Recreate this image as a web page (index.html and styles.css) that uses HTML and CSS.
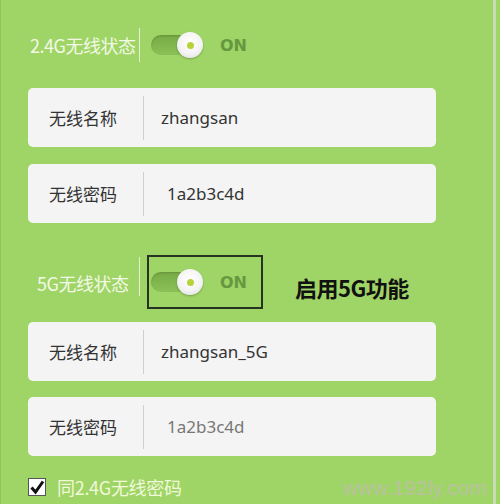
FILE: index.html
```html
<!DOCTYPE html>
<html lang="zh">
<head>
<meta charset="utf-8">
<link rel="stylesheet" href="styles.css">
</head>
<body>
<div class="page">
  <div class="status status--first">
    <span class="status-label status-label--a">2.4G无线状态</span>
    <span class="vsep vsep--a"></span>
    <div class="toggle-wrap">
      <span class="toggle"><span class="track"></span><span class="knob"><span class="dot"></span></span></span>
      <span class="on">ON</span>
    </div>
  </div>

  <div class="card card--first">
    <span class="card-label">无线名称</span>
    <span class="card-sep"></span>
    <span class="card-value">zhangsan</span>
  </div>
  <div class="card card--gap">
    <span class="card-label">无线密码</span>
    <span class="card-sep"></span>
    <span class="card-value card-value--pw">1a2b3c4d</span>
  </div>

  <div class="status status--second">
    <span class="status-label status-label--b">5G无线状态</span>
    <span class="vsep vsep--b"></span>
    <div class="toggle-wrap toggle-wrap--boxed">
      <span class="toggle"><span class="track"></span><span class="knob"><span class="dot"></span></span></span>
      <span class="on">ON</span>
    </div>
    <span class="note">启用5G功能</span>
  </div>

  <div class="card card--third">
    <span class="card-label">无线名称</span>
    <span class="card-sep"></span>
    <span class="card-value">zhangsan_5G</span>
  </div>
  <div class="card card--fourth">
    <span class="card-label">无线密码</span>
    <span class="card-sep"></span>
    <span class="card-value card-value--pw card-value--muted">1a2b3c4d</span>
  </div>

  <div class="check-row">
    <span class="checkbox">
      <svg viewBox="0 0 18 18" width="18" height="18"><path d="M3.5 9.5 L7.5 14 L15 3.5" fill="none" stroke="#111" stroke-width="3" stroke-linejoin="miter"/></svg>
    </span>
    <span class="check-label">同2.4G无线密码</span>
  </div>

  <div class="watermark">www.192ly.com</div>
</div>
</body>
</html>
```
FILE: styles.css
```css
html, body {
  margin: 0;
  padding: 0;
}
body {
  background: #9fd466;
  font-family: "Noto Sans CJK SC", "Noto Sans", sans-serif;
}
.page {
  position: relative;
  width: 496px;
  height: 504px;
  box-sizing: border-box;
  border-left: 1px solid #8dc556;
  border-right: 3px solid #c9dcb6;
  padding: 27px 0 0 27px;
  overflow: hidden;
}
.status {
  display: flex;
  align-items: center;
}
.status--first {
  height: 36px;
}
.status--second {
  margin-top: 33px;
  height: 54px;
}
.status-label {
  font-size: 18px;
  color: #f2f9e4;
  line-height: 20px;
  letter-spacing: -0.5px;
  white-space: nowrap;
}
.status-label--a {
  margin-left: 2px;
  width: 109px;
}
.status-label--b {
  margin-left: 9px;
  width: 102px;
}
.vsep {
  width: 1px;
  background: #e4f2d2;
}
.vsep--a { height: 34px; }
.vsep--b { height: 39px; margin-top: -14px; }
.toggle-wrap {
  display: flex;
  align-items: center;
  margin-left: 11px;
  height: 36px;
}
.toggle-wrap--boxed {
  margin-left: 7px;
  height: 50px;
  width: 110px;
  border: 2px solid #263320;
  padding-left: 2px;
  box-sizing: content-box;
  margin-top: -2px;
}
.toggle {
  position: relative;
  width: 52px;
  height: 26px;
  display: block;
}
.track {
  position: absolute;
  left: 0;
  top: 3px;
  width: 38px;
  height: 20px;
  border-radius: 10px;
  background: linear-gradient(#76aa46, #8bc156);
  box-shadow: inset 0 1px 2px rgba(0,0,0,0.15);
}
.knob {
  position: absolute;
  left: 26px;
  top: 0;
  width: 26px;
  height: 26px;
  border-radius: 50%;
  background: radial-gradient(circle at 50% 40%, #ffffff 0%, #f4f4f4 55%, #d8d8d8 100%);
  box-shadow: 0 1px 2px rgba(0,0,0,0.25);
}
.dot {
  position: absolute;
  left: 10px;
  top: 10px;
  width: 7px;
  height: 7px;
  border-radius: 50%;
  background: #b8d23a;
}
.on {
  margin-left: 17px;
  font-family: "DejaVu Sans", sans-serif;
  font-weight: bold;
  font-size: 16px;
  color: #66983f;
}
.note {
  margin-left: 32px;
  margin-top: 8px;
  font-size: 22px;
  font-weight: bold;
  color: #111;
  letter-spacing: -0.5px;
}
.card {
  display: flex;
  align-items: center;
  width: 408px;
  height: 59px;
  background: #f4f4f4;
  border-radius: 5px;
  box-sizing: border-box;
  padding-left: 21px;
}
.card--first { margin-top: 25px; }
.card--gap { margin-top: 17px; }
.card--third { margin-top: 12px; }
.card--fourth { margin-top: 16px; }
.card-label {
  width: 94px;
  font-size: 17px;
  color: #333;
}
.card-sep {
  width: 1px;
  height: 44px;
  background: #cfcfcf;
}
.card-value {
  margin-left: 17px;
  font-family: "Noto Sans", sans-serif;
  font-size: 17px;
  color: #333;
}
.card-value--pw {
  margin-left: 23px;
}
.card-value--muted {
  color: #777;
}
.check-row {
  display: flex;
  align-items: center;
  margin-top: 18px;
}
.checkbox {
  width: 18px;
  height: 18px;
  background: #fff;
  border: 1px solid #555;
  box-sizing: border-box;
  display: flex;
}
.checkbox svg {
  margin: -1px;
}
.check-label {
  margin-left: 11px;
  font-size: 18px;
  color: #f1f8d8;
  letter-spacing: -0.3px;
}
.watermark {
  position: absolute;
  right: 6px;
  bottom: 4px;
  font-family: "Liberation Sans", sans-serif;
  font-size: 21px;
  color: rgba(205, 180, 200, 0.6);
}
```
